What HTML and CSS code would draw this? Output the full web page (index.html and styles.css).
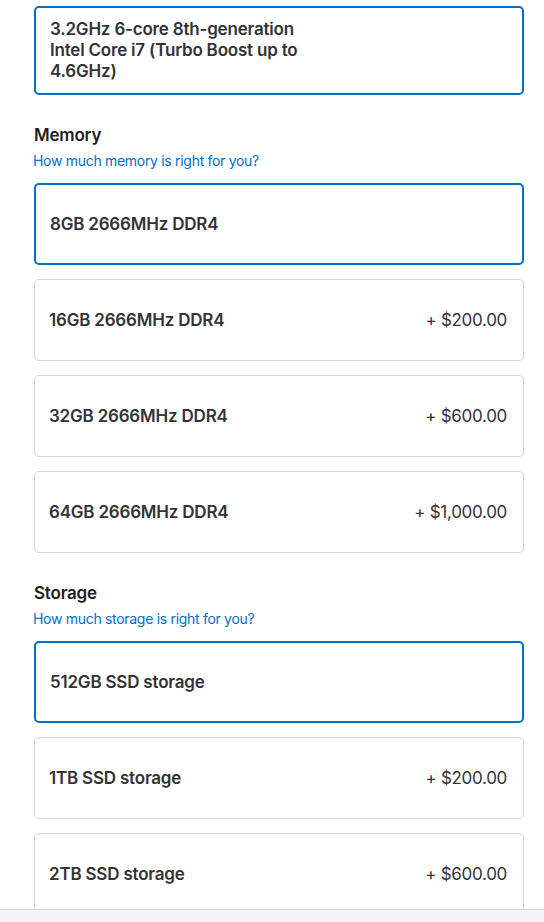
FILE: index.html
```html
<!DOCTYPE html>
<html lang="en">

<head>
    <meta charset="UTF-8">
    <meta name="viewport" content="width=device-width, initial-scale=1.0">
    <title>Configure</title>
    <link rel="stylesheet" href="styles.css">
</head>

<body>
    <div class="config">
        <!-- processador triat -->
        <div class="option selected tall">
            <span class="name">3.2GHz 6-core 8th-generation Intel Core i7 (Turbo Boost up to 4.6GHz)</span>
        </div>

        <div class="group">
            <h3>Memory</h3>
            <a class="help" href="#">How much memory is right for you?</a>
            <div class="option selected"><span class="name">8GB 2666MHz DDR4</span></div>
            <div class="option"><span class="name">16GB 2666MHz DDR4</span><span class="price">+ $200.00</span></div>
            <div class="option"><span class="name">32GB 2666MHz DDR4</span><span class="price">+ $600.00</span></div>
            <div class="option"><span class="name">64GB 2666MHz DDR4</span><span class="price">+ $1,000.00</span></div>
        </div>

        <div class="group">
            <h3>Storage</h3>
            <a class="help" href="#">How much storage is right for you?</a>
            <div class="option selected"><span class="name">512GB SSD storage</span></div>
            <div class="option"><span class="name">1TB SSD storage</span><span class="price">+ $200.00</span></div>
            <div class="option"><span class="name">2TB SSD storage</span><span class="price">+ $600.00</span></div>
        </div>
    </div>

    <div class="summary"></div>
</body>

</html>
```

FILE: styles.css
```css
*{
    box-sizing: border-box;
}
body{
    margin: 0;
    font-family: Inter, "Liberation Sans", sans-serif;
    color: #333336;
    background: #fff;
}
.config{
    margin: 6px 20px 0 34px;
}
.option{
    display: flex;
    justify-content: space-between;
    align-items: center;
    height: 82px;
    padding: 0 16px 0 14px;
    border: 1px solid #d6d6d6;
    border-radius: 5px;
    margin-bottom: 14px;
    font-size: 17px;
    line-height: 21px;
    letter-spacing: -0.2px;
}
.option.selected{
    border: 2px solid #0070c9;
    padding: 0 15px 0 14px;
}
.option.tall{
    height: 89px;
}
.option .name{
    font-weight: 600;
    max-width: 262px;
}
.option .price{
    font-weight: 400;
    letter-spacing: -0.3px;
}
.group{
    margin-top: 30px;
}
.group h3{
    margin: 0;
    font-size: 17px;
    line-height: 21px;
    font-weight: 600;
    color: #1d1d1f;
    letter-spacing: -0.2px;
}
.help{
    display: block;
    margin: 6px 0 13px -1px;
    font-size: 14px;
    line-height: 18px;
    color: #0070c9;
    text-decoration: none;
    letter-spacing: -0.3px;
}
.summary{
    position: fixed;
    left: 0;
    right: 0;
    bottom: 0;
    height: 13px;
    background: #f5f5f7;
    border-top: 1px solid #d6d6d6;
}
```
